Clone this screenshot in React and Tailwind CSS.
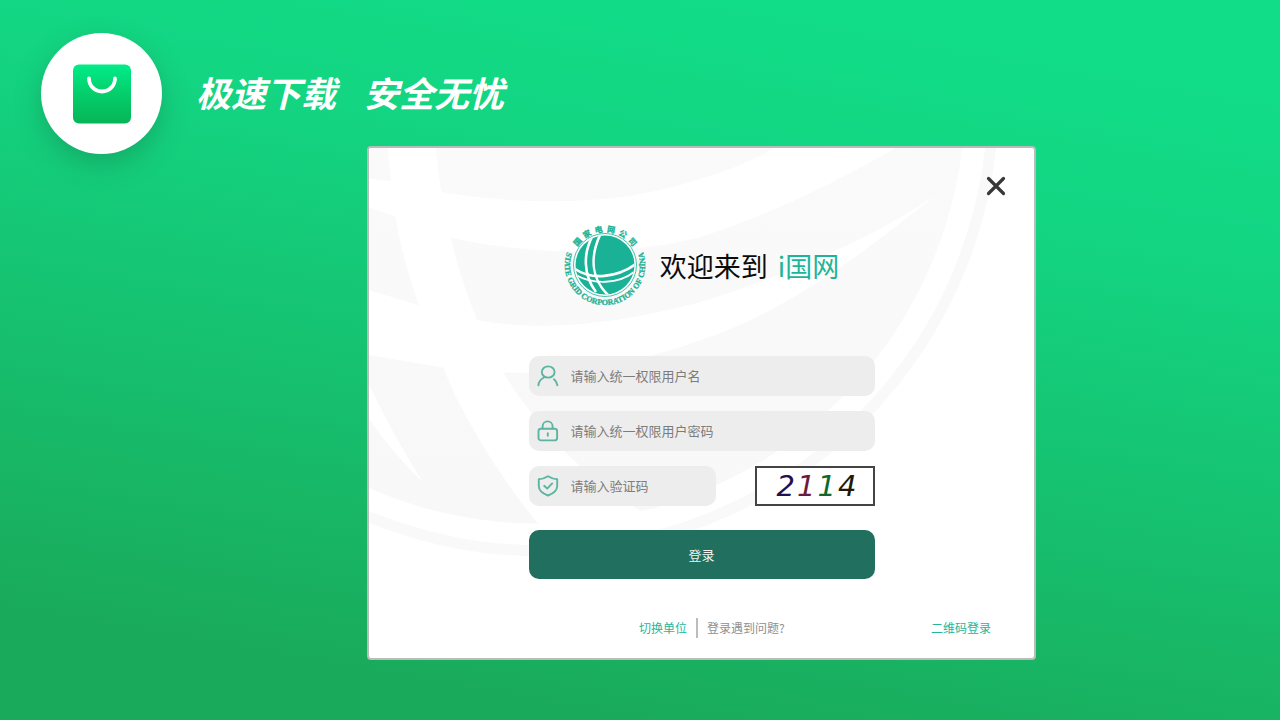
import React from "react";

const RING = ["国", "家", "电", "网", "公", "司"];
const RING_ANGLES = [-50, -30, -10, 10, 30, 50];
const CODE = [
  ["2", "text-[#24104e]"],
  ["1", "text-[#6b1c3c]"],
  ["1", "text-[#0c6a2c]"],
  ["4", "text-[#221a08]"],
];

function BagIcon() {
  return (
    <svg viewBox="0 0 58 60" className="h-[60px] w-[58px]" aria-hidden="true">
      <defs>
        <linearGradient id="bag" x1="0" y1="0" x2="0" y2="1">
          <stop offset="0" stopColor="#00ec88" />
          <stop offset="0.5" stopColor="#04ce6b" />
          <stop offset="1" stopColor="#07b556" />
        </linearGradient>
      </defs>
      <rect x="0" y="0.5" width="58" height="59" rx="6" fill="url(#bag)" />
      <path d="M16 14.5a13 13 0 0 0 26 0" fill="none" stroke="#fff" strokeWidth="3.8" strokeLinecap="round" />
    </svg>
  );
}

function Watermark() {
  return (
    <svg
      viewBox="370 149 664 509"
      preserveAspectRatio="xMinYMin slice"
      className="absolute inset-0 h-full w-full"
      aria-hidden="true"
    >
      <defs>
        <linearGradient id="globe" x1="0" y1="149" x2="0" y2="520" gradientUnits="userSpaceOnUse">
          <stop offset="0" stopColor="#fafafa" />
          <stop offset="1" stopColor="#f8f8f8" />
        </linearGradient>
      </defs>
      <circle cx="542" cy="100" r="451" fill="none" stroke="#f9f9f9" strokeWidth="11" />
      <circle cx="540" cy="99" r="425" fill="url(#globe)" />
      <g fill="#fff">
        <path d="M360 177Q376 181 392 182L442 193C530 207 620 207 700 180Q745 167 778 147H899Q795 208 700 238C620 258 530 256 450 238L396 217L360 205Z" />
        <path d="M360 288L420 306L478 321C550 333 620 324 700 303C790 275 870 240 936 196C870 248 790 312 700 341C630 366 570 375 505 373L443 368L360 354Z" />
        <path d="M388 145L396 217Q404 262 420 306Q433 345 457 398Q490 464 541 527L565 535L650 516Q575 475 522 400Q494 362 478 321Q445 240 436 145Z" />
        <path d="M360 365Q395 438 424 483Q390 450 360 405Z" />
      </g>
    </svg>
  );
}

function GridLogo() {
  return (
    <svg viewBox="-41 -41 82 82" className="h-[82px] w-[82px] shrink-0" role="img" aria-label="国家电网公司">
      <defs>
        <path id="arc" d="M-34.700 -20.100A40.100 40.100 0 1 0 34.700 -20.100" />
        <clipPath id="disc">
          <circle r="29.5" />
        </clipPath>
      </defs>
      <circle r="31.5" fill="#fff" stroke="#19b296" strokeWidth="0.8" />
      <circle r="29.5" fill="#19b296" />
      <g fill="none" stroke="#fff" clipPath="url(#disc)">
        <path d="M-12 -30C-22 -12 -22 10 -9 27" strokeWidth="2.6" />
        <path d="M-5 -30C-15 -8 -14 14 4 31" strokeWidth="2.6" />
        <path d="M-30 4C-14 15 12 13 31 -1" strokeWidth="2.6" />
        <path d="M-29 10C-12 20 14 19 29 7" strokeWidth="1.8" />
      </g>
      <g fill="#19b296" stroke="#19b296" strokeWidth="0.3">
        {RING.map((c, i) => (
          <text
            key={c}
            transform={`rotate(${RING_ANGLES[i]})`}
            y="-33"
            textAnchor="middle"
            className="font-['Noto_Sans_CJK_SC',sans-serif] text-[8px] font-bold"
          >
            {c}
          </text>
        ))}
        <text className="font-['Liberation_Serif',serif] text-[8px] font-bold" textAnchor="middle">
          <textPath href="#arc" startOffset="50%">
            STATE GRID CORPORATION OF CHINA
          </textPath>
        </text>
      </g>
    </svg>
  );
}

const iconProps = {
  viewBox: "0 0 22 22",
  fill: "none",
  stroke: "#5cb5a0",
  strokeWidth: 1.9,
  strokeLinecap: "round",
  strokeLinejoin: "round",
  className: "h-[22px] w-[22px] shrink-0",
  "aria-hidden": true,
};

function UserIcon() {
  return (
    <svg {...iconProps}>
      <ellipse cx="11.2" cy="7" rx="6.4" ry="5.6" />
      <path d="M7.800 12C4 13.800 1.600 16.700 1.400 20.400M17 14.200Q20 16.600 20.400 20.200" />
    </svg>
  );
}

function LockIcon() {
  return (
    <svg {...iconProps}>
      <rect x="1.5" y="8.8" width="18.6" height="11.6" rx="2.4" />
      <path d="M5.6 8.5V6.4a5 5 0 0 1 10 0v2.1M10.8 13.200v2.600" />
    </svg>
  );
}

function ShieldIcon() {
  return (
    <svg {...iconProps}>
      <path d="M11 1.3Q15.5 4.1 20.2 4.2V11C20.2 15.4 16.2 18.6 11 20.5C5.8 18.6 1.8 15.4 1.8 11V4.2Q6.500 4.100 11 1.3Z" />
      <path d="M7.2 10.8l3 2.8L15.200 8.400" />
    </svg>
  );
}

function Field({ icon, label, type = "text", className = "" }) {
  return (
    <label className={`flex h-10 items-center gap-3 rounded-[10px] bg-[#ededed] px-2 ${className}`}>
      {icon}
      <input
        type={type}
        placeholder={label}
        aria-label={label}
        className="min-w-0 flex-1 bg-transparent text-[13px] text-[#666] outline-none placeholder:text-[#7c7c7c]"
      />
    </label>
  );
}

export default function App() {
  return (
    <main className="min-h-screen bg-[linear-gradient(190deg,#11dd88_8%,#13d582_28%,#19ab5b_88%)] pb-[60px] font-['Noto_Sans_CJK_SC',sans-serif]">
      <header className="flex items-center gap-[34px] pt-[33px] pl-[41px] text-white">
        <div className="flex h-[121px] w-[121px] shrink-0 items-center justify-center rounded-full bg-white shadow-[0_10px_26px_rgba(20,110,65,0.35)]">
          <BagIcon />
        </div>
        <p className="flex gap-7 pb-[5px] text-[35px] leading-none font-bold italic">
          <span>极速下载</span>
          <span>安全无忧</span>
        </p>
      </header>

      <div className="-mt-2 pr-[244px] pl-[367px]">
        <section className="relative overflow-hidden rounded-[4px] border-2 border-[#b9bcbb] bg-white pb-5">
          <Watermark />
          <div className="relative">
            <div className="flex justify-end pt-7 pr-7">
              <button type="button" aria-label="关闭" className="flex h-5 w-5 items-center justify-center">
                <svg viewBox="0 0 20 20" className="h-5 w-5" aria-hidden="true">
                  <path d="M2.500 2.500L17.500 17.500M17.500 2.500L2.500 17.500" stroke="#383838" strokeWidth="3.2" strokeLinecap="round" />
                </svg>
              </button>
            </div>

            <h1 className="mt-7 flex items-center justify-center gap-[14px] text-[27px] leading-none">
              <GridLogo />
              <span className="flex gap-[10px]">
                <span className="text-[#0c0c0c]">欢迎来到</span>
                <span className="text-[#1db599]">i国网</span>
              </span>
            </h1>

            <form className="mx-auto mt-[50px] flex w-[346px] max-w-full flex-col" onSubmit={(e) => e.preventDefault()}>
              <div className="flex flex-col gap-[15px]">
                <Field icon={<UserIcon />} label="请输入统一权限用户名" />
                <Field icon={<LockIcon />} label="请输入统一权限用户密码" type="password" />
                <div className="flex justify-between">
                  <Field icon={<ShieldIcon />} label="请输入验证码" className="w-[187px]" />
                  <button
                    type="button"
                    className="flex h-10 w-[120px] items-center justify-center gap-[2px] border-2 border-[#444] bg-white pl-1 font-['DejaVu_Sans',sans-serif] text-[29px] leading-none italic"
                  >
                    {CODE.map(([n, color], i) => (
                      <span key={i} className={color}>
                        {n}
                      </span>
                    ))}
                  </button>
                </div>
              </div>
              <button type="submit" className="mt-6 h-[49px] rounded-[10px] bg-[#216f5f] text-[13px] text-[#eef5f3]">
                登录
              </button>
            </form>

            <footer className="mt-[39px] flex items-center justify-between pr-[43px] pl-[270px] text-[12px] leading-5">
              <div className="flex items-center">
                <a href="#unit" className="text-[#26b59a]">切换单位</a>
                <span className="mx-[9px] h-5 w-[2px] bg-[#bdbdbd]" />
                <a href="#help" className="text-[#8f8f8f]">登录遇到问题?</a>
              </div>
              <a href="#qr" className="text-[#26b59a]">二维码登录</a>
            </footer>
          </div>
        </section>
      </div>
    </main>
  );
}
